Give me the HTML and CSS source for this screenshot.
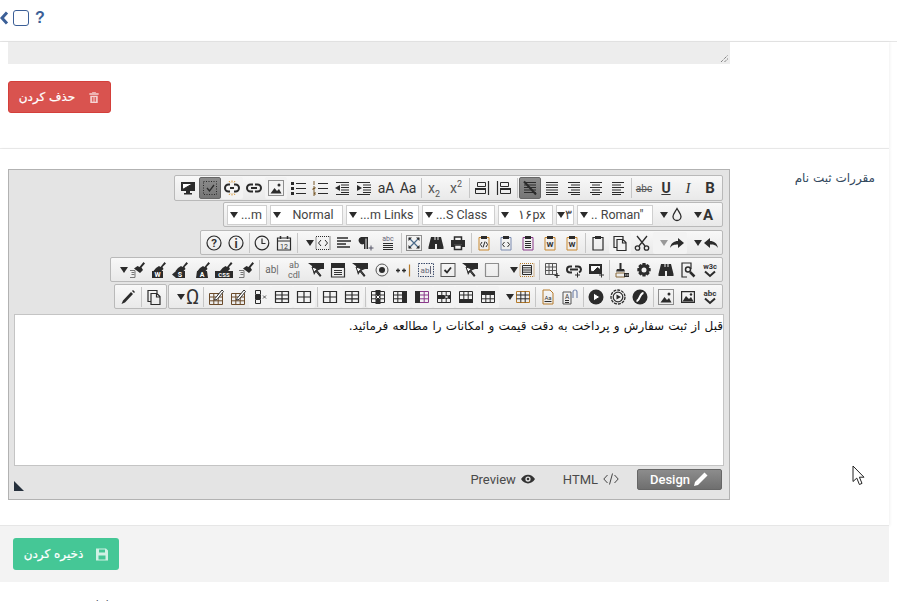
FILE: index.html
```html
<!DOCTYPE html>
<html lang="fa">
<head>
  <meta charset="UTF-8" />
  <title>مقررات ثبت نام</title>
  <link rel="stylesheet" href="styles.css">
</head>
<body>
  <!-- toolbar icon sprite -->
  <svg class="sprite" xmlns="http://www.w3.org/2000/svg">
    <symbol id="i-monitor" viewBox="0 0 16 16"><rect class="f" x="1" y="2" width="14" height="9"/><path fill="#fff" d="M2.500 9.500 13 3.500H2.500z"/><path class="f" d="M6 11h4v2h2v1.500H4V13h2z"/></symbol>
    <symbol id="i-dotcheck" viewBox="0 0 16 16"><rect x="1.500" y="1.500" width="13" height="13" stroke-dasharray="1 1.500"/><path stroke-width="1.300" d="M5 8l2.500 3L12 5"/></symbol>
    <symbol id="i-unlink" viewBox="0 0 16 16"><path stroke-width="2" d="M6 4.500H4.500a3.500 3.500 0 0 0 0 7H6M10 4.500h1.500a3.500 3.500 0 0 1 0 7H10M6 8h4"/><path stroke="#d89a3a" d="M8 .5v2M8 13.500v2M5 1l1 1.500M11 1l-1 1.500M5 15l1-1.500M11 15l-1-1.500"/></symbol>
    <symbol id="i-link" viewBox="0 0 16 16"><path stroke-width="2" d="M7 4.500H4.500a3.500 3.500 0 0 0 0 7H7M9 4.500h2.500a3.500 3.500 0 0 1 0 7H9M5 8h6"/></symbol>
    <symbol id="i-imgdot" viewBox="0 0 16 16"><rect x=".5" y=".5" width="15" height="15" stroke-dasharray="1 1"/><path class="f" d="M2.500 13.500 6.500 8l2.500 3 2-2 2.500 4.500z"/><circle class="f" cx="11" cy="5" r="1.500"/></symbol>
    <symbol id="i-ul" viewBox="0 0 16 16"><path class="f" d="M1 2h3v3H1zM1 7h3v3H1zM1 12h3v3H1z"/><path d="M6 3.500h10M6 8.500h10M6 13.500h10"/></symbol>
    <symbol id="i-ol" viewBox="0 0 16 16"><path stroke="#7a5a2a" d="M2 1v4M1 7h2v1.500H1V10h2M1 12h2v1.500H1.500M3 13.500V15H1"/><path d="M6 3.500h10M6 8.500h10M6 13.500h10"/></symbol>
    <symbol id="i-outdent" viewBox="0 0 16 16"><path d="M2 2.500h13M7 5h8M7 7.500h8M7 10h8M7 12.500h8M2 14.500h13"/><path class="f" d="M6 5v6L1 8z"/></symbol>
    <symbol id="i-indent" viewBox="0 0 16 16"><path d="M1 2.500h13M1 14.500h13M7 5h8M7 7.500h8M7 10h8M7 12.500h8"/><path class="f" d="M1 5v6l5-3z"/></symbol>
    <symbol id="i-ltr" viewBox="0 0 16 16"><path d="M3.500 2.500h8v4h-8z"/><path class="f" d="M1 8h11v2H1z"/><path d="M1.500 10v3.500h10V10"/><path stroke-width="1.200" d="M14.500 1v14"/></symbol>
    <symbol id="i-rtl" viewBox="0 0 16 16"><path d="M4.500 2.500h8v4h-8z"/><path class="f" d="M4 8h11v2H4z"/><path d="M4.500 10v3.500h10V10"/><path stroke-width="1.200" d="M1.500 1v14"/></symbol>
    <symbol id="i-jnone" viewBox="0 0 16 16"><path d="M2 2.500h12M2 5h12M2 7.500h12M2 10h12M2 12.500h12"/><path stroke-width="2" d="M2 1.500 14 14.500"/></symbol>
    <symbol id="i-jfull" viewBox="0 0 16 16"><path d="M2 2.500h12M2 5h12M2 7.500h12M2 10h12M2 12.500h12M2 14.500h12"/></symbol>
    <symbol id="i-jright" viewBox="0 0 16 16"><path d="M2 2.500h12M5 5h9M2 7.500h12M5 10h9M2 12.500h12M5 14.500h9"/></symbol>
    <symbol id="i-jcenter" viewBox="0 0 16 16"><path d="M2 2.500h12M4 5h8M2 7.500h12M4 10h8M2 12.500h12M4 14.500h8"/></symbol>
    <symbol id="i-jleft" viewBox="0 0 16 16"><path d="M2 2.500h12M2 5h9M2 7.500h12M2 10h9M2 12.500h12M2 14.500h9"/></symbol>
    <symbol id="i-drop" viewBox="0 0 16 16"><path stroke-width="1.300" d="M8 1.500c2 3.500 4 5.500 4 8a4 4 0 0 1-8 0c0-2.500 2-4.500 4-8z"/></symbol>
    <symbol id="i-undo" viewBox="0 0 16 16"><path class="f" d="M7 3v3c4 0 7 2 8 7-2-3-4-3.500-8-3.500V13L1 8z"/></symbol>
    <symbol id="i-redo" viewBox="0 0 16 16"><path class="f" d="M9 3v3C5 6 2 8 1 13c2-3 4-3.500 8-3.500V13l6-5z"/></symbol>
    <symbol id="i-cut" viewBox="0 0 16 16"><circle stroke-width="1.300" cx="3.500" cy="13" r="2.200"/><circle stroke-width="1.300" cx="12.500" cy="13" r="2.200"/><path stroke-width="1.300" d="M5 11 13 1M11 11 3 1"/></symbol>
    <symbol id="i-copy" viewBox="0 0 16 16"><path stroke-width="1.200" d="M11 4V1.500H2v11h3M5 4.500h6l3 3v8H5zM10.500 4.500v3.500H14"/></symbol>
    <symbol id="i-paste" viewBox="0 0 16 16"><path stroke-width="1.200" d="M5 2.500H3v12.500h10V2.500h-2"/><rect class="f" x="5" y="1" width="6" height="3"/></symbol>
    <symbol id="i-pastew" viewBox="0 0 16 16"><path stroke="#c9882f" d="M5 2.500H3v12.500h10V2.500h-2"/><rect class="f" x="5" y="1" width="6" height="3"/><text class="it" x="8" y="12" font-size="8" font-weight="700">W</text></symbol>
    <symbol id="i-pastel" viewBox="0 0 16 16"><path stroke="#8a3a8a" d="M5 2.500H3v12.500h10V2.500h-2"/><rect class="f" x="5" y="1" width="6" height="3"/><path d="M5 6.500h6M5 8.500h6M5 10.500h6M5 12.500h6"/></symbol>
    <symbol id="i-pastec" viewBox="0 0 16 16"><path stroke="#7a8ab0" d="M5 2.500H3v12.500h10V2.500h-2"/><rect class="f" x="5" y="1" width="6" height="3"/><path d="M6.500 7 4.500 9.500l2 2.500M9.500 7l2 2.500-2 2.500"/></symbol>
    <symbol id="i-pastec2" viewBox="0 0 16 16"><path stroke="#c9882f" d="M5 2.500H3v12.500h10V2.500h-2"/><rect class="f" x="5" y="1" width="6" height="3"/><path d="M6 7 4.500 9.500l1.500 2.500M10 7l1.500 2.500L10 12M9 6.500l-2 6"/></symbol>
    <symbol id="i-print" viewBox="0 0 16 16"><path stroke-width="1.500" d="M4.500 5V2h7v3"/><path class="f" d="M1 5h14v7h-3V9.500H4V12H1z"/><path stroke-width="1.500" d="M4.500 10h7v4.500h-7z"/></symbol>
    <symbol id="i-binoc" viewBox="0 0 16 16"><path class="f" d="M3 2h3.500v3H7.500V2H9.500v3h1V2H13l2.500 10v2H9v-5H7v5H.5v-2z"/></symbol>
    <symbol id="i-full" viewBox="0 0 16 16"><rect x=".5" y=".5" width="15" height="15" stroke-dasharray="1 1"/><path stroke="#4a6a8a" stroke-width="1.200" d="M3 3l10 10M13 3 3 13"/><path class="f" d="M2.500 2.500h3.500L2.500 6zM13.500 2.500V6L10 2.500zM2.500 13.500V10L6 13.500zM13.500 13.500H10L13.500 10z"/></symbol>
    <symbol id="i-abcdoc" viewBox="0 0 16 16"><text class="it g" x="8" y="6" font-size="7">abc</text><path d="M3 8.500h10M3 10.500h10M3 12.500h10M3 14.500h10"/></symbol>
    <symbol id="i-para" viewBox="0 0 16 16"><path class="f" d="M3 2h7v12H8.500V3.500H7.500V14H6V9a3.500 3.500 0 0 1-3-7z"/><path d="M10.500 13h5M13 10.500v5" stroke="#556"/></symbol>
    <symbol id="i-alignl" viewBox="0 0 16 16"><path stroke-width="1.300" d="M1 3h11M1 6h14M1 9h9M1 12h13"/></symbol>
    <symbol id="i-codebox" viewBox="0 0 16 16"><rect x="1" y="1.500" width="14" height="13" stroke-dasharray="1 1"/><path d="M6 5 3.500 8 6 11M10 5l2.500 3L10 11"/></symbol>
    <symbol id="i-cal" viewBox="0 0 16 16"><path stroke-width="1.200" d="M1.500 3h13v12h-13zM1.500 6h13"/><path stroke-width="1.500" d="M4.500 1v3M11.500 1v3"/><text class="it" x="8" y="13.500" font-size="7">12</text></symbol>
    <symbol id="i-clock" viewBox="0 0 16 16"><circle stroke-width="1.200" cx="8" cy="8" r="6.800"/><path stroke-width="1.200" d="M8 3.500V8.500h3.500"/></symbol>
    <symbol id="i-info" viewBox="0 0 16 16"><circle stroke-width="1.200" cx="8" cy="8" r="7"/><text class="it" x="8" y="12.500" font-size="12" font-weight="700">i</text></symbol>
    <symbol id="i-help" viewBox="0 0 16 16"><circle stroke-width="1.200" cx="8" cy="8" r="7"/><text class="it" x="8" y="12.300" font-size="11.500" font-weight="700">?</text></symbol>
    <symbol id="i-w3c" viewBox="0 0 16 16"><text class="it" x="8" y="6.500" font-size="7.500" font-weight="700">w3c</text><path stroke-width="2" d="M3 9.500l5 4.500 5-4.500"/></symbol>
    <symbol id="i-abcchk" viewBox="0 0 16 16"><text class="it" x="8" y="6.500" font-size="8" font-weight="700">abc</text><path stroke-width="2" d="M3 9.500l5 4.500 5-4.500"/></symbol>
    <symbol id="i-wrench" viewBox="0 0 16 16"><path stroke-width="1.200" d="M7 15H2V1h9v6"/><circle stroke-width="1.500" cx="8" cy="7.500" r="2.500"/><path stroke-width="2.500" d="M10 10l4.500 4.500"/></symbol>
    <symbol id="i-gear" viewBox="0 0 16 16"><path class="f" fill-rule="evenodd" d="M6.500 1h3l.4 2 1.700-1 2.100 2.100-1 1.700 2 .4v3l-2 .4 1 1.700-2.100 2.100-1.700-1-.4 2h-3l-.4-2-1.700 1-2.100-2.100 1-1.700-2-.4v-3l2-.4-1-1.700L4.400 2l1.700 1zM8 5.500a2.500 2.500 0 1 0 0 5 2.500 2.500 0 0 0 0-5z"/></symbol>
    <symbol id="i-brushbig" viewBox="0 0 16 16"><path class="f" d="M5.500 1h2v6H10l1 2.500H2L3 7h2.500z"/><path stroke="#8a6a3a" d="M2 11h9v4H2z"/><path class="f" d="M10 11h5v4h-5z"/><path stroke="#ddd" d="M11 13h1.500M13 13h1.500"/></symbol>
    <symbol id="i-imgadd" viewBox="0 0 16 16"><path class="f" d="M1 2h13v10H1z"/><path fill="#fff" d="M2.500 3.500h10V8L9.500 5.500 5 10 3.500 9l-1 1z"/><path d="M11 13h5M13.500 10.500v5" stroke="#333"/></symbol>
    <symbol id="i-linkadd" viewBox="0 0 16 16"><path stroke-width="2" d="M6 4.500H4a3 3 0 0 0 0 6h2M9 4.500h3a3 3 0 0 1 1 5.800M4 7.500h8"/><path d="M9 13h5M11.500 10.500v5"/></symbol>
    <symbol id="i-tableadd" viewBox="0 0 16 16"><path stroke="#555" d="M1.500 1.500h11v11h-11zM1.500 5h11M1.500 8.500h11M5 1.500v11M8.500 1.500v11"/><path stroke-width="1.200" d="M10.500 13.500h5M13 11v5"/></symbol>
    <symbol id="i-tabprop" viewBox="0 0 16 16"><rect x="1" y="1.500" width="14" height="13" stroke-dasharray="1 1" stroke="#b57a2a"/><path d="M3.500 3.500h9v9h-9zM3.500 5.800h9M3.500 8h9M3.500 10.200h9"/></symbol>
    <symbol id="i-dotbox" viewBox="0 0 16 16"><rect x="1.500" y="1.500" width="13" height="13" stroke-dasharray="1 1" stroke-width="1.200"/></symbol>
    <symbol id="i-cursor" viewBox="0 0 16 16"><path class="f" d="M0 1h16v6h-5l1 0L8 7zM4 4l9 3-3.500 1.500 4 5-1.500 1.500-4-5L6 13z"/><path fill="#fff" d="M4 5l6 2-2 1 4 5-.5.500-4-5-1.500 2z"/></symbol>
    <symbol id="i-checkbox" viewBox="0 0 16 16"><rect stroke="#555" x="1" y="1.500" width="14" height="13"/><path stroke-width="1.800" d="M4.500 8l2.500 2.500 4-5"/></symbol>
    <symbol id="i-abdot" viewBox="0 0 16 16"><rect x=".5" y="1.500" width="15" height="13" stroke-dasharray="1.500 1" stroke="#3a4a6a"/><text class="it g" x="7" y="11" font-size="8">ab</text><path d="M12.500 4v8" stroke="#667"/></symbol>
    <symbol id="i-hidden" viewBox="0 0 16 16"><path stroke-width="1.300" d="M0 8.500h4M2 6.500v4M6 8.500h4M8 6.500v4"/><path stroke="#b57a2a" stroke-width="1.200" d="M13.500 2.500v12"/></symbol>
    <symbol id="i-radio" viewBox="0 0 16 16"><circle stroke="#555" cx="8" cy="8" r="6"/><circle class="f" cx="8" cy="8" r="3"/></symbol>
    <symbol id="i-formbox" viewBox="0 0 16 16"><path class="f" d="M1 1h14v5H1z"/><path stroke="#333" stroke-width="1.200" d="M1.500 6v9h13V6M4 8.500h8M4 10.500h8M4 12.500h8"/></symbol>
    <symbol id="i-brushdoc" viewBox="0 0 16 16"><path class="f" d="M14.500 0 16 1.500l-3.500 4L14 8l-3 3-6-4.500 3.500-2.500 2 1z"/><path stroke="#777" d="M1 8.500h5v7H1M2.500 10.500h3M2.500 12.500h3"/></symbol>
    <symbol id="i-brushw" viewBox="0 0 16 16"><path class="f" d="M14.500 0 16 1.500l-3.500 3.500 1 2-2 2H3.500L6 6l3-2 1.500 1z"/><rect class="f" x="2" y="9" width="11" height="7"/><text class="it w" x="7.500" y="15.200" font-size="7" font-weight="700">W</text></symbol>
    <symbol id="i-brushs" viewBox="0 0 16 16"><path class="f" d="M14.500 0 16 1.500l-3.500 3.500 1 2-2 2H3.500L6 6l3-2 1.500 1z"/><path class="f" d="M4 9h9v7H4L0 12.500z"/><text class="it w" x="8" y="15.200" font-size="7" font-weight="700">S</text></symbol>
    <symbol id="i-brusha" viewBox="0 0 16 16"><path class="f" d="M14.500 0 16 1.500l-3.500 3.500 1 2-2 2H3.500L6 6l3-2 1.500 1z"/><path class="f" d="M3 9h10l1 7H2z"/><text class="it w" x="8" y="15.200" font-size="7" font-weight="700">A</text></symbol>
    <symbol id="i-brushc" viewBox="0 0 18 16"><path class="f" d="M16 0l1.500 1.500L14 5l1 2-2 2H5l2.500-3 3-2L12 5z"/><rect class="f" x="0" y="9" width="18" height="7"/><text class="it w" x="9" y="15" font-size="6" font-weight="700">CSS</text></symbol>
    <symbol id="i-image" viewBox="0 0 16 16"><path class="f" fill-rule="evenodd" d="M1 2h14v12H1zM2.200 3.200v9.600h11.600V3.200z"/><path class="f" d="M2.500 12.500 6 7l3 3 2-2 2.500 4.500z"/><circle class="f" cx="11" cy="5.500" r="1.200"/></symbol>
    <symbol id="i-flash" viewBox="0 0 16 16"><circle class="f" cx="8" cy="8" r="7.500"/><path stroke="#fff" stroke-width="2" d="M4.500 12C8 12 7.500 4 11.500 4"/></symbol>
    <symbol id="i-video" viewBox="0 0 16 16"><circle stroke-width="1.300" stroke-dasharray="3 1" cx="8" cy="8" r="7"/><circle stroke-width="1.200" cx="8" cy="8" r="4.800"/><path class="f" d="M6.500 5.500 11 8l-4.500 2.500z"/></symbol>
    <symbol id="i-play" viewBox="0 0 16 16"><circle class="f" cx="8" cy="8" r="7.500"/><path fill="#fff" d="M5.500 4 12 8l-6.500 4z"/></symbol>
    <symbol id="i-docat" viewBox="0 0 16 16"><path stroke="#555" d="M1 3h8v12H1z"/><text class="it" x="5" y="10" font-size="6.500">A</text><path d="M3 11.500h4M3 13.500h4"/><path stroke="#7a8ab0" stroke-width="1.200" d="M11 9V3a2 2 0 0 1 4 0v6"/></symbol>
    <symbol id="i-docaa" viewBox="0 0 16 16"><path stroke="#b57a2a" d="M3 1h7l3 3v11H3z"/><text class="it" x="8" y="10.500" font-size="6">Aa</text><path d="M4.500 12.500h7"/></symbol>
    <symbol id="i-table" viewBox="0 0 16 16"><path stroke="#b57a2a" d="M1.500 2.500h13v11h-13z"/><path d="M1.500 6h13M1.500 9.800h13M5.800 2.500v11M10.200 2.500v11"/></symbol>
    <symbol id="i-tabhead" viewBox="0 0 16 16"><path class="f" d="M1 2h14v4H1z"/><path d="M1.500 2.500h13v11h-13zM1.500 9.800h13M5.800 6v7.500M10.200 6v7.500"/></symbol>
    <symbol id="i-tabfoot" viewBox="0 0 16 16"><path class="f" d="M1 10h14v4H1z"/><path d="M1.500 2.500h13v11h-13zM1.500 6h13M5.800 2.500V10M10.200 2.500V10"/></symbol>
    <symbol id="i-tabrowx" viewBox="0 0 16 16"><path d="M1.500 2.500h13v11h-13zM5.800 2.500v11M10.200 2.500v11"/><path class="f" d="M1 6h14v4H1z"/><path stroke="#fff" d="M9 6.500l3 3M12 6.500l-3 3"/></symbol>
    <symbol id="i-tabcolr" viewBox="0 0 16 16"><path d="M1.500 2.500h13v11h-13zM1.500 6h13M1.500 9.800h13M5.800 2.500v11"/><path class="f" d="M10 2h5v12h-5z"/></symbol>
    <symbol id="i-tabcoll" viewBox="0 0 16 16"><path stroke="#8a3a8a" d="M1.500 2.500h13v11h-13zM1.500 6h13M1.500 9.800h13M10.200 2.500v11"/><path class="f" d="M1 2h5v12H1z"/></symbol>
    <symbol id="i-tabcolx" viewBox="0 0 16 16"><path d="M1.500 2.500h13v11h-13zM1.500 6h13M1.500 9.800h13"/><path class="f" d="M5.500 1h5v14h-5z"/><path stroke="#fff" d="M6.500 6.500l3 3M9.500 6.500l-3 3"/></symbol>
    <symbol id="i-tabv" viewBox="0 0 16 16"><path stroke-width="1.200" d="M1.500 2.500h13v11h-13zM8 2.500v11M1.500 8h13"/></symbol>
    <symbol id="i-tabh" viewBox="0 0 16 16"><path stroke-width="1.200" d="M1.500 2.500h13v11h-13zM1.500 6h13M1.500 9.800h13M8 2.500v11"/></symbol>
    <symbol id="i-cellx" viewBox="0 0 16 16"><path d="M3.500 1.500h5v4h-5zM3.500 10.500h5v4h-5z"/><path class="f" d="M3 6h6v4H3z"/><path stroke="#555" d="M11 6.500l3 3M14 6.500l-3 3"/></symbol>
    <symbol id="i-tabedit" viewBox="0 0 16 16"><path stroke="#6a4a2a" d="M1.500 4.500h13v11h-13zM1.500 8h13M1.500 11.800h13M5.800 4.500v11M10.200 4.500v11"/><path fill="#fff" stroke="#333" d="M7 9.500 14 1l1.500 1.500L9 10.500 6.500 11z"/></symbol>
    <symbol id="i-pencil" viewBox="0 0 16 16"><path class="f" d="M11 3l2 2-8 8.500-3.500 1.500L3 11.500zM12 2l1-1 2 2-1 1z"/></symbol>
  </svg>

  <div class="page">
    <header class="topbar">
      <svg class="back" viewBox="0 0 9 14"><path d="M7 1.500 2 7l5 5.500"/></svg>
      <span class="top-box"></span>
      <span class="top-help">?</span>
    </header>

    <section class="row row-top">
      <div class="old-text"><svg class="grip" viewBox="0 0 9 9"><path d="M1 8 8 1M4.500 8 8 4.500"/></svg></div>
      <a class="btn btn-red">
        <span>حذف کردن</span>
        <svg class="btn-ic" viewBox="0 0 12 14"><path d="M1 2.500h10v1.500H1zM4 1h4v1H4zM2 5h8v8H2z"/><path class="cut" d="M4.300 6.500v5M6 6.500v5M7.700 6.500v5"/></svg>
      </a>
    </section>

    <section class="row row-editor">
      <div class="editor">
        <div class="tb-row tb-first">
          <div class="tb-group">
            <span class="b"><svg class="ic"><use href="#i-monitor"/></svg></span>
            <span class="b on"><svg class="ic"><use href="#i-dotcheck"/></svg></span>
            <span class="b soft"><svg class="ic"><use href="#i-unlink"/></svg></span>
            <span class="b"><svg class="ic"><use href="#i-link"/></svg></span>
            <span class="b soft"><svg class="ic"><use href="#i-imgdot"/></svg></span>
            <span class="b"><svg class="ic"><use href="#i-ul"/></svg></span>
            <span class="b"><svg class="ic"><use href="#i-ol"/></svg></span>
            <span class="b"><svg class="ic"><use href="#i-outdent"/></svg></span>
            <span class="b"><svg class="ic"><use href="#i-indent"/></svg></span>
            <span class="b t">aA</span>
            <span class="b t">Aa</span>
            <i class="sep"></i>
            <span class="b t sm"><span>x<sub>2</sub></span></span>
            <span class="b t sm"><span>x<sup>2</sup></span></span>
            <i class="sep"></i>
            <span class="b"><svg class="ic"><use href="#i-ltr"/></svg></span>
            <span class="b"><svg class="ic"><use href="#i-rtl"/></svg></span>
            <i class="sep"></i>
            <span class="b on"><svg class="ic"><use href="#i-jnone"/></svg></span>
            <span class="b"><svg class="ic"><use href="#i-jfull"/></svg></span>
            <span class="b"><svg class="ic"><use href="#i-jright"/></svg></span>
            <span class="b"><svg class="ic"><use href="#i-jcenter"/></svg></span>
            <span class="b"><svg class="ic"><use href="#i-jleft"/></svg></span>
            <i class="sep"></i>
            <span class="b t strike">abc</span>
            <span class="b t under">U</span>
            <span class="b t ital">I</span>
            <span class="b t bold">B</span>
          </div>
        </div>

        <div class="tb-row tb-second">
          <div class="tb-group fields">
            <span class="fld w40"><i class="car"></i>...m</span>
            <span class="fld w73"><i class="car"></i><em>Normal</em></span>
            <span class="fld w73"><i class="car"></i>...m Links</span>
            <span class="fld w73"><i class="car"></i>...S Class</span>
            <span class="fld w55"><i class="car"></i><em>۱۶px</em></span>
            <span class="fld w18"><i class="car"></i>۳</span>
            <span class="fld w76"><i class="car"></i>.. Roman"</span>
            <span class="b wide"><i class="car"></i><svg class="ic"><use href="#i-drop"/></svg></span>
            <span class="b wide"><i class="car"></i><span class="t bold">A</span></span>
          </div>
        </div>

        <div class="tb-row">
          <div class="tb-group">
            <span class="b"><svg class="ic"><use href="#i-help"/></svg></span>
            <span class="b"><svg class="ic"><use href="#i-info"/></svg></span>
            <i class="sep"></i>
            <span class="b"><svg class="ic"><use href="#i-clock"/></svg></span>
            <span class="b"><svg class="ic"><use href="#i-cal"/></svg></span>
            <i class="sep"></i>
            <span class="b wide"><i class="car"></i><svg class="ic"><use href="#i-codebox"/></svg></span>
            <span class="b"><svg class="ic"><use href="#i-alignl"/></svg></span>
            <span class="b"><svg class="ic"><use href="#i-para"/></svg></span>
            <span class="b"><svg class="ic"><use href="#i-abcdoc"/></svg></span>
            <i class="sep"></i>
            <span class="b"><svg class="ic"><use href="#i-full"/></svg></span>
            <span class="b"><svg class="ic"><use href="#i-binoc"/></svg></span>
            <span class="b"><svg class="ic"><use href="#i-print"/></svg></span>
            <i class="sep"></i>
            <span class="b"><svg class="ic"><use href="#i-pastec2"/></svg></span>
            <span class="b"><svg class="ic"><use href="#i-pastec"/></svg></span>
            <span class="b"><svg class="ic"><use href="#i-pastel"/></svg></span>
            <span class="b"><svg class="ic"><use href="#i-pastew"/></svg></span>
            <span class="b"><svg class="ic"><use href="#i-pastew"/></svg></span>
            <i class="sep"></i>
            <span class="b"><svg class="ic"><use href="#i-paste"/></svg></span>
            <span class="b soft"><svg class="ic"><use href="#i-copy"/></svg></span>
            <span class="b"><svg class="ic"><use href="#i-cut"/></svg></span>
            <span class="b wide soft"><i class="car off"></i><svg class="ic"><use href="#i-redo"/></svg></span>
            <span class="b wide"><i class="car"></i><svg class="ic"><use href="#i-undo"/></svg></span>
          </div>
        </div>

        <div class="tb-row">
          <div class="tb-group">
            <span class="b wide"><i class="car"></i><svg class="ic"><use href="#i-brushdoc"/></svg></span>
            <span class="b"><svg class="ic"><use href="#i-brushw"/></svg></span>
            <span class="b"><svg class="ic"><use href="#i-brushs"/></svg></span>
            <span class="b"><svg class="ic"><use href="#i-brusha"/></svg></span>
            <span class="b"><svg class="ic css"><use href="#i-brushc"/></svg></span>
            <span class="b"><svg class="ic"><use href="#i-brushdoc"/></svg></span>
            <i class="sep"></i>
            <span class="b t mini">ab|</span>
            <span class="b t cdl"><span>ab<br>cdl</span></span>
            <span class="b"><svg class="ic"><use href="#i-cursor"/></svg></span>
            <span class="b"><svg class="ic"><use href="#i-formbox"/></svg></span>
            <span class="b"><svg class="ic"><use href="#i-cursor"/></svg></span>
            <span class="b"><svg class="ic"><use href="#i-radio"/></svg></span>
            <span class="b"><svg class="ic"><use href="#i-hidden"/></svg></span>
            <span class="b"><svg class="ic"><use href="#i-abdot"/></svg></span>
            <span class="b"><svg class="ic"><use href="#i-checkbox"/></svg></span>
            <span class="b"><svg class="ic"><use href="#i-cursor"/></svg></span>
            <span class="b"><svg class="ic"><use href="#i-dotbox"/></svg></span>
            <span class="b wide"><i class="car"></i><svg class="ic"><use href="#i-tabprop"/></svg></span>
            <i class="sep"></i>
            <span class="b"><svg class="ic"><use href="#i-tableadd"/></svg></span>
            <span class="b"><svg class="ic"><use href="#i-linkadd"/></svg></span>
            <span class="b"><svg class="ic"><use href="#i-imgadd"/></svg></span>
            <i class="sep"></i>
            <span class="b"><svg class="ic"><use href="#i-brushbig"/></svg></span>
            <span class="b"><svg class="ic"><use href="#i-gear"/></svg></span>
            <span class="b"><svg class="ic"><use href="#i-binoc"/></svg></span>
            <span class="b"><svg class="ic"><use href="#i-wrench"/></svg></span>
            <span class="b"><svg class="ic"><use href="#i-w3c"/></svg></span>
          </div>
        </div>

        <div class="tb-row">
          <div class="tb-group">
            <span class="b"><svg class="ic"><use href="#i-pencil"/></svg></span>
            <i class="sep"></i>
            <span class="b"><svg class="ic"><use href="#i-copy"/></svg></span>
          </div>
          <div class="tb-group">
            <span class="b wide om"><i class="car"></i><span class="t omega">Ω</span></span>
            <i class="sep"></i>
            <span class="b"><svg class="ic"><use href="#i-tabedit"/></svg></span>
            <span class="b"><svg class="ic"><use href="#i-tabedit"/></svg></span>
            <span class="b soft"><svg class="ic"><use href="#i-cellx"/></svg></span>
            <span class="b soft"><svg class="ic"><use href="#i-tabh"/></svg></span>
            <span class="b soft"><svg class="ic"><use href="#i-tabv"/></svg></span>
            <i class="sep"></i>
            <span class="b soft"><svg class="ic"><use href="#i-tabv"/></svg></span>
            <span class="b soft"><svg class="ic"><use href="#i-tabh"/></svg></span>
            <i class="sep"></i>
            <span class="b soft"><svg class="ic"><use href="#i-tabcolx"/></svg></span>
            <span class="b soft"><svg class="ic"><use href="#i-tabcolr"/></svg></span>
            <span class="b soft"><svg class="ic"><use href="#i-tabcoll"/></svg></span>
            <span class="b soft"><svg class="ic"><use href="#i-tabrowx"/></svg></span>
            <span class="b soft"><svg class="ic"><use href="#i-tabfoot"/></svg></span>
            <span class="b soft"><svg class="ic"><use href="#i-tabhead"/></svg></span>
            <span class="b wide"><i class="car"></i><svg class="ic"><use href="#i-table"/></svg></span>
            <i class="sep"></i>
            <span class="b"><svg class="ic"><use href="#i-docaa"/></svg></span>
            <span class="b"><svg class="ic"><use href="#i-docat"/></svg></span>
            <i class="sep"></i>
            <span class="b"><svg class="ic"><use href="#i-play"/></svg></span>
            <span class="b"><svg class="ic"><use href="#i-video"/></svg></span>
            <span class="b"><svg class="ic"><use href="#i-flash"/></svg></span>
            <i class="sep"></i>
            <span class="b"><svg class="ic"><use href="#i-imgdot"/></svg></span>
            <span class="b"><svg class="ic"><use href="#i-image"/></svg></span>
            <span class="b"><svg class="ic"><use href="#i-abcchk"/></svg></span>
          </div>
        </div>

        <div class="content" dir="rtl">قبل از ثبت سفارش و پرداخت به دقت قیمت و امکانات را مطالعه فرمائید.</div>

        <div class="statusbar">
          <i class="resize"></i>
          <span class="mode">Preview
            <svg class="mode-ic eye-ic" viewBox="0 0 16 12"><path class="eye" fill-rule="evenodd" d="M0 6c2-3.500 5-5 8-5s6 1.500 8 5c-2 3.500-5 5-8 5S2 9.500 0 6zm8-3a3 3 0 1 0 0 6 3 3 0 0 0 0-6z"/><circle class="eye" cx="8" cy="6" r="1.500"/></svg>
          </span>
          <span class="mode">HTML
            <svg class="mode-ic code" viewBox="0 0 16 12"><path d="M4.500 2 .8 6l3.700 4M11.500 2l3.700 4-3.700 4M9.500 .5l-3 11"/></svg>
          </span>
          <span class="mode mode-on">Design
            <svg class="mode-ic pen" viewBox="0 0 16 16"><path d="M11.500 1.500l3 3L5 14l-4 1 1-4z"/></svg>
          </span>
        </div>
      </div>
      <label class="field-label">مقررات ثبت نام</label>
    </section>

    <footer class="actions">
      <a class="btn btn-green">
        <span>ذخیره کردن</span>
        <svg class="btn-ic" viewBox="0 0 12 12"><path fill-rule="evenodd" d="M0 0h10l2 2v10H0zM3 1v3h6V1zM2.500 7v4h7V7z"/></svg>
      </a>
    </footer>
    <p class="copyright">کلیه حقوق این وب سایت محفوظ است (۲) ایران ۱۴۰۰</p>
  </div>

  <svg class="mouse" viewBox="0 0 13 21"><path d="M1 1v15.500l3.800-3.400 2.600 6.400 2.600-1.100-2.600-6.200H12z"/></svg>
</body>
</html>
```

FILE: styles.css
```css
* {
  box-sizing: border-box;
}
html, body {
  margin: 0;
  height: 100%;
  overflow: hidden;
}
body {
  position: relative;
  background: white;
  font-family: "DejaVu Sans", sans-serif;
  color: #333;
}
.sprite {
  display: none;
}
.page {
  width: 889px;
}

/* top bar */
.topbar {
  height: 42px;
  width: 897px;
  border-bottom: 1px solid #e6e6e6;
  display: flex;
  align-items: center;
  padding-bottom: 6px;
}
.back {
  width: 9px;
  height: 14px;
  fill: none;
  stroke: #3b5f97;
  stroke-width: 3;
}
.top-box {
  width: 16px;
  height: 16px;
  margin-left: 4px;
  border: 1.500px solid #3b5f97;
  border-radius: 3px;
}
.top-help {
  margin-left: 6px;
  font: bold 16px "Liberation Sans", sans-serif;
  color: #3b5f97;
}

/* rows */
.row {
  background: white;
  box-shadow: 1px 0 3px rgba(0,0,0,0.06);
}
.row-top {
  height: 107px;
  padding-left: 8px;
  border-bottom: 1px solid #ececec;
}
.old-text {
  width: 722px;
  height: 22px;
  background: #ededed;
  margin-bottom: 17px;
  display: flex;
  justify-content: flex-end;
  align-items: flex-end;
}
.grip {
  width: 9px;
  height: 9px;
  margin: 0 1px 1px 0;
  fill: none;
  stroke: #555;
  stroke-dasharray: 1 1;
}
.row-editor {
  height: 377px;
  padding: 20px 14px 0 8px;
  border-bottom: 1px solid #e6e6e6;
  display: flex;
  justify-content: space-between;
}
.field-label {
  font-size: 12px;
  color: #34495e;
  direction: rtl;
  margin-top: 2px;
}

/* buttons */
.btn {
  display: inline-flex;
  align-items: center;
  justify-content: center;
  gap: 13px;
  height: 32px;
  border-radius: 3px;
  color: white;
  font-size: 12px;
  -webkit-text-stroke: 0.2px white;
}
.btn-red {
  width: 103px;
  background: #d9534f;
  border: 1px solid #d43f3a;
}
.btn-green {
  width: 106px;
  background: #45c796;
}
.btn-ic {
  width: 12px;
  height: 13px;
  fill: rgba(255,255,255,0.75);
}
.btn-ic .cut {
  stroke: #d9534f;
  fill: none;
}

/* editor */
.editor {
  width: 722px;
  height: 331px;
  background: #e4e4e4;
  border: 1px solid #b2b2b2;
  padding-top: 5px;
  display: flex;
  flex-direction: column;
  font-family: Roboto, sans-serif;
}
.tb-row {
  display: flex;
  justify-content: flex-end;
  margin: 0 6px 2px 0;
  height: 25px;
}
.tb-first {
  height: 26px;
  margin-bottom: 1px;
}
.tb-second {
  margin-bottom: 3px;
}
.tb-group {
  display: flex;
  align-items: center;
  padding: 0 1px 0 2px;
  background: linear-gradient(#f8f8f8, #e9e9e9);
  border: 1px solid #b9b9b9;
  border-radius: 2px;
}
.tb-group + .tb-group {
  margin-left: 1px;
}
.b {
  width: 22px;
  height: 22px;
  display: flex;
  align-items: center;
  justify-content: center;
  flex: none;
  border-radius: 2px;
}
.b.wide {
  width: 34px;
  gap: 1px;
  padding-left: 7px;
  justify-content: flex-start;
}
.b.om {
  width: 30px;
  padding-left: 6px;
}
.b.soft {
  background: #f3f3f3;
}
.b.on {
  background: linear-gradient(#8c8c8c, #767676);
  border: 1px solid #666;
}
.ic {
  width: 16px;
  height: 16px;
  fill: none;
  stroke: #2b2b2b;
  stroke-width: 1;
  flex: none;
}
.ic.css {
  width: 18px;
}
.f {
  fill: #2b2b2b;
  stroke: none;
}
.it {
  font-family: Roboto, sans-serif;
  text-anchor: middle;
  stroke: none;
  fill: #333;
}
.it.w {
  fill: white;
}
.it.g {
  fill: #667;
}
.sep {
  width: 1px;
  height: 20px;
  margin: 0 1.500px;
  background: #c6c6c6;
  flex: none;
}
.car {
  width: 0;
  height: 0;
  flex: none;
  border-left: 4.500px solid transparent;
  border-right: 4.500px solid transparent;
  border-top: 6px solid #2b2b2b;
}
.car.off {
  border-top-color: #999;
}
.t {
  font-size: 14px;
  color: #333;
}
.t.sm {
  font-size: 14px;
  color: #555;
}
.t sub, .t sup {
  font-size: 9px;
  line-height: 0;
}
.strike {
  font-size: 10px;
  text-decoration: line-through;
  color: #555;
}
.under {
  font-weight: bold;
  text-decoration: underline;
}
.ital {
  font: italic 15px "Liberation Serif", serif;
}
.bold {
  font-weight: bold;
  font-size: 15px;
}
.mini {
  font-size: 10px;
  color: #666;
}
.cdl {
  font-size: 9px;
  line-height: 10px;
  color: #666;
  text-align: center;
}
.omega {
  font-size: 20px;
  line-height: 22px;
}

/* font / size selects */
.fields {
  gap: 3px;
  padding-left: 3px;
}
.fields .b.wide {
  margin-left: -3px;
}
.fld {
  height: 20px;
  display: flex;
  align-items: center;
  gap: 3px;
  padding-left: 2px;
  background: white;
  border: 1px solid #cfcfcf;
  font-size: 12.500px;
  color: #444;
  white-space: nowrap;
  overflow: hidden;
  flex: none;
}
.fld em {
  font-style: normal;
  flex: 1;
  text-align: center;
}
.w40 { width: 40px; }
.w73 { width: 73px; }
.w55 { width: 55px; }
.w18 {
  width: 18px;
  gap: 0;
  padding-left: 0;
}
.w76 { width: 76px; }

/* editing area */
.content {
  height: 152px;
  margin: 3px 5px 0;
  background: white;
  border: 1px solid #c4c4c4;
  font-size: 12px;
  word-spacing: 0.4px;
  line-height: 22px;
  color: #111;
  font-family: "DejaVu Sans", sans-serif;
}
.statusbar {
  flex: 1;
  display: flex;
  align-items: center;
  justify-content: flex-end;
  gap: 28px;
  padding: 0 7px 7px 5px;
}
.resize {
  margin-right: auto;
  margin-top: 14px;
  width: 0;
  height: 0;
  border-bottom: 10px solid #26303c;
  border-right: 10px solid transparent;
}
.mode {
  display: flex;
  align-items: center;
  gap: 5px;
  font-size: 13px;
  color: #4a4a4a;
}
.mode-on {
  width: 85px;
  height: 21px;
  justify-content: center;
  gap: 3px;
  margin-left: -10px;
  color: white;
  font-weight: 500;
  background: linear-gradient(#8c8c8c, #6f6f6f);
  border: 1px solid #666;
  border-radius: 2px;
}
.mode-ic {
  width: 16px;
  height: 12px;
}
.eye-ic {
  width: 14px;
}
.eye {
  fill: #333;
}
.code {
  fill: none;
  stroke: #444;
}
.pen {
  height: 16px;
  fill: white;
}

/* bottom */
.actions {
  height: 56px;
  padding: 12px 13px;
  background: #f3f3f3;
}
.copyright {
  margin: 17px 0 0 50px;
  font-size: 12px;
  color: #445;
  direction: rtl;
  width: 260px;
}

.mouse {
  position: absolute;
  left: 852px;
  top: 465px;
  width: 13px;
  height: 21px;
  fill: white;
  stroke: #222;
}
```
